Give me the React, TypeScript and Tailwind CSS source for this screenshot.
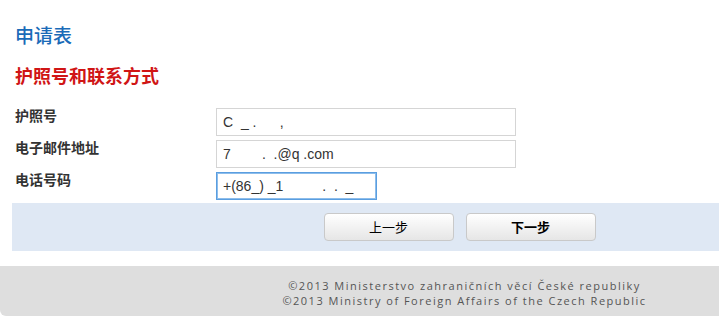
const cjk = "font-['Noto_Sans_CJK_SC','Noto_Sans',sans-serif]"

const inputBase =
  "h-[28px] border bg-white px-[6px] text-[14px] text-[#333] font-['Liberation_Sans','Noto_Sans_CJK_SC',sans-serif] flex items-center whitespace-pre"

const rows = [
  { label: '护照号', value: 'C  _ .      ,', width: 'w-[300px]', focus: false },
  { label: '电子邮件地址', value: '7        .  .@q .com', width: 'w-[300px]', focus: false },
  { label: '电话号码', value: '+(86_) _1          .  .  _', width: 'w-[161px]', focus: true },
]

export default function App() {
  return (
    <div className="h-[316px] w-full overflow-hidden bg-white">
      <div className="w-[929px]">
        <div className="px-[15px] pt-[22px]">
          <h1 className={`${cjk} text-[19px] font-medium leading-[26px] text-[#1a6bb8]`}>申请表</h1>
          <h2 className={`${cjk} mt-[14px] text-[18px] font-bold leading-[26px] text-[#d01515]`}>
            护照号和联系方式
          </h2>
        </div>

        <div className="mt-[20px] flex flex-col gap-[4px]">
          {rows.map((r) => (
            <div key={r.label} className="flex h-[28px]">
              <div className={`${cjk} w-[216px] pl-[15px] text-[14px] font-bold leading-[14px] text-[#333]`}>
                {r.label}
              </div>
              <div
                className={`${inputBase} ${r.width} ${
                  r.focus ? 'border-[#5a9ee0] shadow-[0_0_0_1px_#8dbdeb_inset]' : 'border-[#d5d5d5]'
                }`}
              >
                {r.value}
              </div>
            </div>
          ))}
        </div>

        <div className="ml-[12px] mt-[3px] flex h-[48px] w-[895px] items-center justify-center gap-[12px] bg-[#dfe8f4]">
          <button
            type="button"
            className={`${cjk} h-[28px] w-[130px] rounded-[4px] border border-[#c9c9c9] bg-gradient-to-b from-white to-[#e6e6e6] text-[13px] text-black`}
          >
            上一步
          </button>
          <button
            type="button"
            className={`${cjk} h-[28px] w-[130px] rounded-[4px] border border-[#c9c9c9] bg-gradient-to-b from-white to-[#e6e6e6] text-[13px] font-bold text-black`}
          >
            下一步
          </button>
        </div>

        <div className="mt-[15px] flex h-[50px] flex-col items-center rounded-b-[6px] bg-[#dedede] pt-[12px] font-['Open_Sans',sans-serif] text-[11px] leading-[15px] tracking-[1.5px] text-[#555]">
          <p>©2013 Ministerstvo zahraničních věcí České republiky</p>
          <p>©2013 Ministry of Foreign Affairs of the Czech Republic</p>
        </div>
      </div>
    </div>
  )
}
